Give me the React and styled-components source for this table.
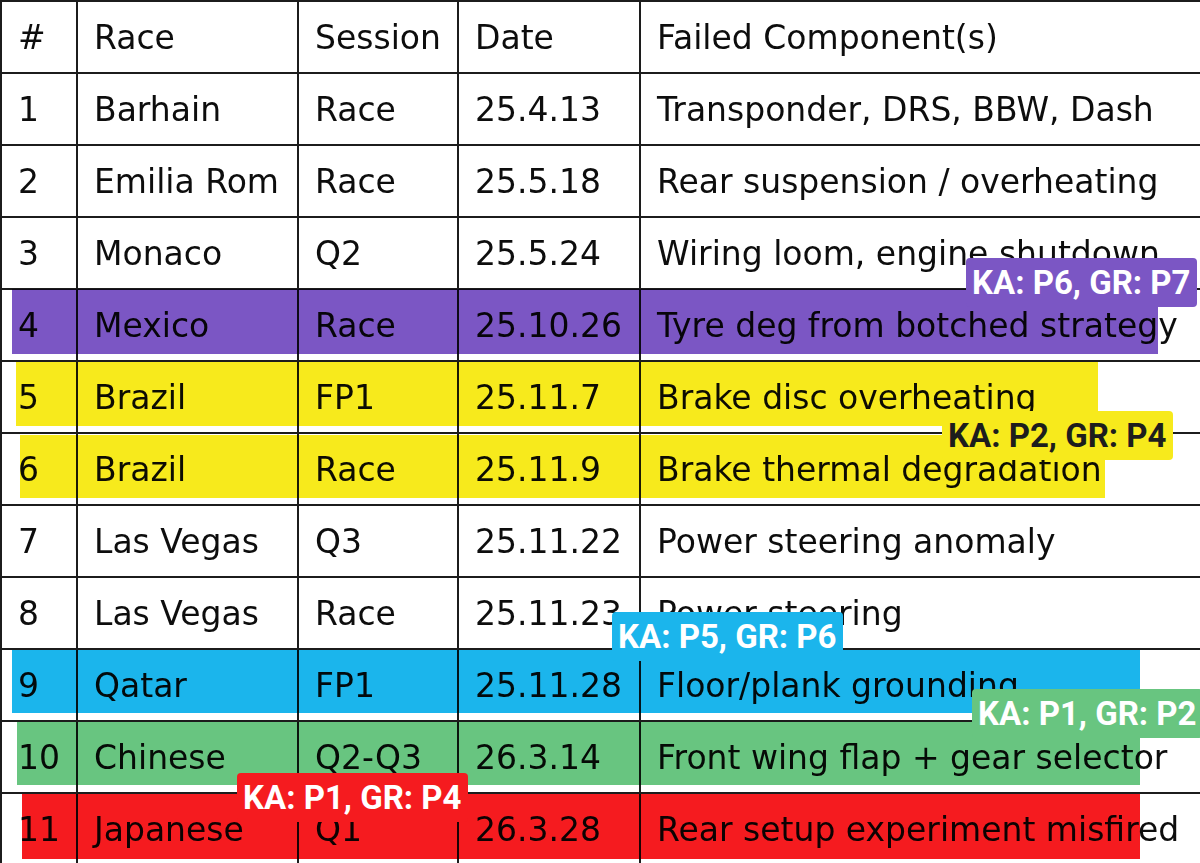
import styled, { createGlobalStyle } from "styled-components";

const GlobalStyle = createGlobalStyle`
  html, body {
    margin: 0;
    padding: 0;
    background: #fff;
    overflow: hidden;
  }
`;

const Sheet = styled.div`
  position: relative;
  width: 1200px;
  height: 863px;
  overflow: hidden;
  background: #fff;
  font-family: "DejaVu Sans", "Liberation Sans", sans-serif;
  color: #0d0d0d;
`;

const Row = styled.div`
  position: relative;
  display: grid;
  grid-template-columns: 76px 221px 160px 182px 1fr;
  height: 72px;
  box-sizing: border-box;
  border-top: 2px solid #1c1c1c;
`;

const Cell = styled.div`
  display: flex;
  align-items: center;
  padding-left: 16px;
  border-left: 2px solid #1c1c1c;
  font-size: 33px;
  white-space: nowrap;
`;

const Mark = styled.div`
  position: absolute;
  left: ${(p) => p.$left}px;
  width: ${(p) => p.$width}px;
  top: ${(p) => p.$top}px;
  bottom: ${(p) => p.$bottom}px;
  background: ${(p) => p.$color};
  mix-blend-mode: multiply;
  pointer-events: none;
`;

const Badge = styled.div`
  position: absolute;
  left: ${(p) => p.$x}px;
  top: ${(p) => p.$y}px;
  z-index: 2;
  padding: 8px 6px;
  border-radius: 4px;
  background: ${(p) => p.$color};
  color: ${(p) => p.$ink || "#fff"};
  font-family: Roboto, "Liberation Sans", sans-serif;
  font-weight: 700;
  font-size: 33px;
  line-height: 33px;
  white-space: nowrap;
`;

const PURPLE = "#7b56c4";
const YELLOW = "#f7ea1c";
const BLUE = "#1bb5ec";
const GREEN = "#68c580";
const RED = "#f51b1f";

const rows = [
  ["#", "Race", "Session", "Date", "Failed Component(s)"],
  ["1", "Barhain", "Race", "25.4.13", "Transponder, DRS, BBW, Dash"],
  ["2", "Emilia Rom", "Race", "25.5.18", "Rear suspension / overheating"],
  ["3", "Monaco", "Q2", "25.5.24", "Wiring loom, engine shutdown"],
  ["4", "Mexico", "Race", "25.10.26", "Tyre deg from botched strategy", { color: PURPLE, left: 12, width: 1146, top: -1, bottom: 6 }],
  ["5", "Brazil", "FP1", "25.11.7", "Brake disc overheating", { color: YELLOW, left: 16, width: 1082, top: 0, bottom: 6 }],
  ["6", "Brazil", "Race", "25.11.9", "Brake thermal degradation", { color: YELLOW, left: 20, width: 1085, top: 1, bottom: 6 }],
  ["7", "Las Vegas", "Q3", "25.11.22", "Power steering anomaly"],
  ["8", "Las Vegas", "Race", "25.11.23", "Power steering"],
  ["9", "Qatar", "FP1", "25.11.28", "Floor/plank grounding", { color: BLUE, left: 12, width: 1128, top: 0, bottom: 7 }],
  ["10", "Chinese", "Q2-Q3", "26.3.14", "Front wing flap + gear selector", { color: GREEN, left: 17, width: 1123, top: 0, bottom: 7 }],
  ["11", "Japanese", "Q1", "26.3.28", "Rear setup experiment misfired", { color: RED, left: 22, width: 1118, top: 0, bottom: 5 }],
];

const badges = [
  { text: "KA: P6, GR: P7", x: 966, y: 258, color: PURPLE },
  { text: "KA: P2, GR: P4", x: 942, y: 411, color: YELLOW, ink: "#1d1d1d" },
  { text: "KA: P5, GR: P6", x: 612, y: 612, color: BLUE },
  { text: "KA: P1, GR: P2", x: 972, y: 689, color: GREEN },
  { text: "KA: P1, GR: P4", x: 237, y: 773, color: RED },
];

export default function App() {
  return (
    <>
      <GlobalStyle />
      <Sheet>
        {rows.map((r, i) => {
          const mark = r[5];
          return (
            <Row key={i}>
              {r.slice(0, 5).map((c, j) => (
                <Cell key={j}>{c}</Cell>
              ))}
              {mark && (
                <Mark
                  $color={mark.color}
                  $left={mark.left}
                  $width={mark.width}
                  $top={mark.top}
                  $bottom={mark.bottom}
                />
              )}
            </Row>
          );
        })}
        {badges.map((b) => (
          <Badge key={b.y} $x={b.x} $y={b.y} $color={b.color} $ink={b.ink}>
            {b.text}
          </Badge>
        ))}
      </Sheet>
    </>
  );
}
